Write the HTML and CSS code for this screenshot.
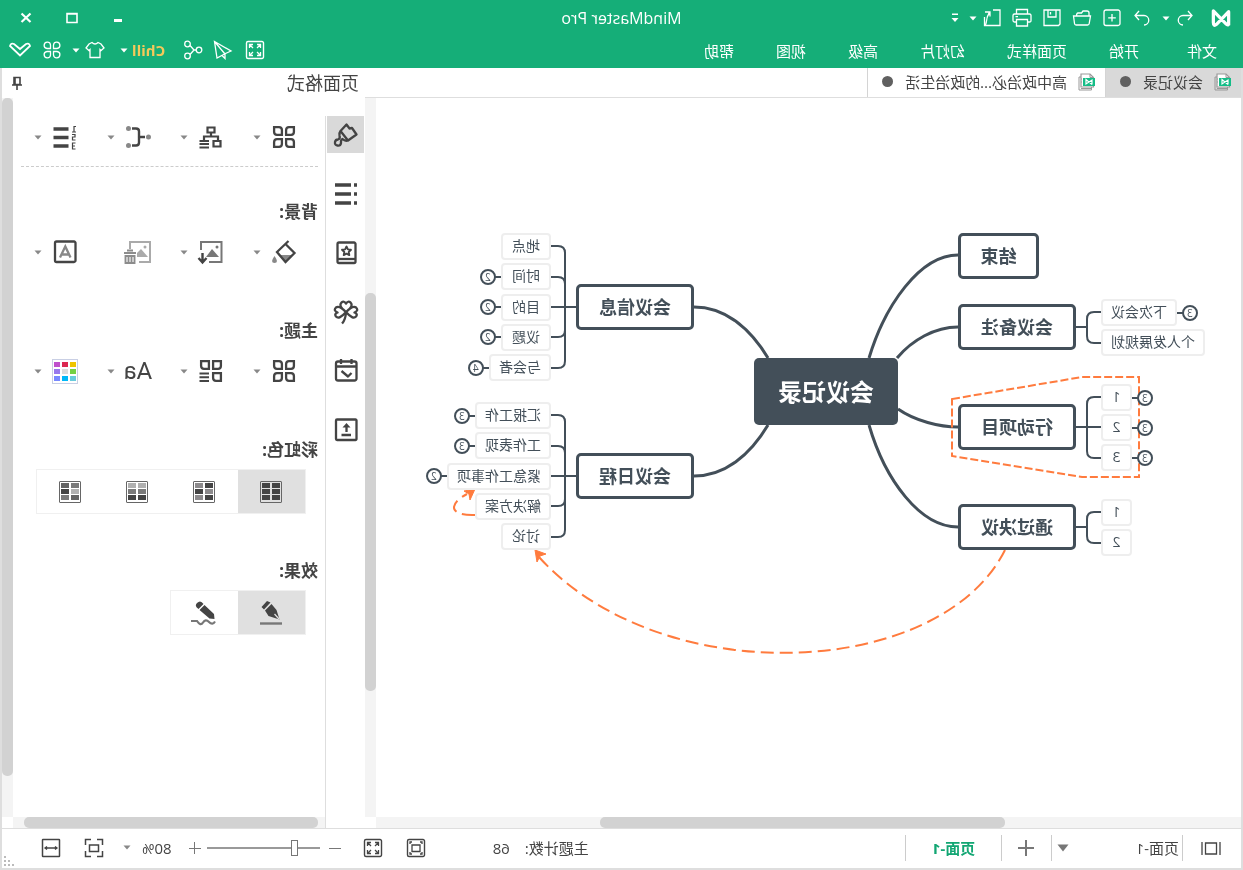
FILE: index.html
```html
<!DOCTYPE html>
<html lang="zh-CN">
<head>
<meta charset="utf-8">
<title>MindMaster Pro</title>
<link rel="stylesheet" href="styles.css">
</head>
<body>
<svg class="defs" aria-hidden="true">
  <symbol id="caret" viewBox="0 0 8 5"><path d="M0.5 0.5H7.5L4 4.5Z" fill="currentColor"/></symbol>
  <symbol id="doc" viewBox="0 0 18 18">
    <path d="M6 1H15V14H2.500V4.500Z" fill="#fff" stroke="#999" stroke-width="1.200"/>
    <path d="M4.500 14V17H17V4H15M6 1V4.500H2.500M14 6h1M14 9h1M5 15.500h10" fill="none" stroke="#999"/>
    <rect x="1" y="5" width="12" height="8" fill="#14bd87"/>
    <path d="M4 11.500V7L10 11V6.500L4 11.500M10 6.500V11.500M4 7V11.500" fill="none" stroke="#fff" stroke-width="1.200"/>
  </symbol>
  <symbol id="four" viewBox="0 0 24 24">
    <g fill="none" stroke="currentColor" stroke-width="2.300">
      <path d="M2.100 9.900V5A3 3 0 0 1 5 2.100H9.900V7A3 3 0 0 1 7 9.900Z" transform="rotate(90 6 6)"/>
      <path d="M14.100 2.100H19A3 3 0 0 1 21.900 5V9.900H17A3 3 0 0 1 14.100 7Z" transform="rotate(90 18 6)"/>
      <path d="M2.100 14.100H7A3 3 0 0 1 9.900 17V21.900H5A3 3 0 0 1 2.100 19Z" transform="rotate(90 6 18)"/>
      <path d="M14.100 14.100H19A3 3 0 0 1 21.900 17V21.900H17A3 3 0 0 1 14.100 19Z"/>
    </g>
  </symbol>
  <symbol id="expand" viewBox="0 0 20 20">
    <rect x="1.500" y="1.500" width="17" height="17" rx="1.500" fill="none" stroke="currentColor" stroke-width="1.400"/>
    <path d="M4.500 8V4.500H8M12 4.500h3.500V8M15.500 12v3.500H12M8 15.500H4.500V12M5 5l3 3M15 5l-3 3M15 15l-3-3M5 15l3-3" fill="none" stroke="currentColor" stroke-width="1.300"/>
  </symbol>
</svg>

<div class="app">
  <header class="titlebar">
    <svg class="logo" viewBox="0 0 22 20"><path d="M2.500 18V3L16 17Q19.500 20 19.500 15V2L6 16Q2.500 20 2.500 15" fill="none" stroke="#fff" stroke-width="3.600" stroke-linejoin="round"/></svg>
    <div class="quick">
      <div class="pair">
        <button class="ib" aria-label="撤销"><svg viewBox="0 0 20 20"><path d="M7 3L3 7.500L7 12M3.500 7.500H12a4.500 4.500 0 0 1 0 9.500" /></svg></button>
        <svg class="caret"><use href="#caret"/></svg>
      </div>
      <button class="ib" aria-label="重做"><svg viewBox="0 0 20 20"><path d="M13 3l4 4.500L13 12M16.500 7.500H8a4.500 4.500 0 0 0 0 9.500"/></svg></button>
      <button class="ib" aria-label="新建"><svg viewBox="0 0 20 20"><rect x="2" y="2" width="16" height="15.500" rx="2"/><path d="M10 6v7.500M6.200 9.800h7.600"/></svg></button>
      <button class="ib" aria-label="打开"><svg viewBox="0 0 20 20"><path d="M17 8V5Q17 3 15 3H11L9.500 5H6Q4.500 5 4.500 8M18.500 8H1.500L2.500 15.500Q2.700 17 4 17H15.500Q17 17 17.200 15.500Z" transform="translate(20 0) scale(-1 1)"/></svg></button>
      <button class="ib" aria-label="保存"><svg viewBox="0 0 20 20"><path d="M2 2H18V17.500H3.500L2 16ZM6 2V9H14V2M11.500 4V6.500"/></svg></button>
      <button class="ib" aria-label="打印"><svg viewBox="0 0 20 20"><path d="M4.500 6V1.500H15.500V6M4.500 14H2.500Q1 14 1 12.500V7.500Q1 6 2.500 6H17.500Q19 6 19 7.500V12.500Q19 14 17.500 14H15.500M4.500 11.500H15.500V18H4.500ZM14 8.700H16.500"/></svg></button>
      <div class="pair">
        <button class="ib" aria-label="导出"><svg viewBox="0 0 20 20"><path d="M9 2H2V17.500H17.500V9M17.500 17.500Q16 17 15.500 13Q15 8 12.500 4.500M12 8.500V4H17"/></svg></button>
        <svg class="caret"><use href="#caret"/></svg>
      </div>
      <svg class="custom" viewBox="0 0 8 10"><path d="M1 .5h6v1.500H1zM.5 5h7L4 9Z" fill="#fff"/></svg>
    </div>
    <h1>MindMaster Pro</h1>
    <div class="winbtns">
      <button class="ib" aria-label="最小化"><svg viewBox="0 0 20 20"><path d="M6 12.500h8" stroke-width="3"/></svg></button>
      <button class="ib" aria-label="最大化"><svg viewBox="0 0 20 20"><path d="M5 5.500h10v9H5zM5 6h10" stroke-width="1.600"/></svg></button>
      <button class="ib" aria-label="关闭"><svg viewBox="0 0 20 20"><path d="M5.500 5.500l9 8.500M14.500 5.500l-9 8.500" stroke-width="2.200"/></svg></button>
    </div>
  </header>

  <nav class="menubar">
    <a href="#" class="file">文件</a><a href="#">开始</a><a href="#">页面样式</a><a href="#">幻灯片</a><a href="#">高级</a><a href="#">视图</a><a href="#">帮助</a>
    <div class="tools">
      <button class="ib fullscreen" aria-label="全屏"><svg viewBox="0 0 20 20"><use href="#expand"/></svg></button>
      <button class="ib" aria-label="发送"><svg viewBox="0 0 20 20"><path d="M18.500 1.500L2 11L7.500 13.500L16 18ZM18.500 1.500L8 14V18.500L11 15.500"/></svg></button>
      <button class="ib share" aria-label="分享"><svg viewBox="0 0 20 20"><circle cx="4" cy="10" r="2.800"/><circle cx="15.500" cy="4" r="2.800"/><circle cx="15.500" cy="16" r="2.800"/><path d="M6.800 10H9L13 5.500M9 10L13 14.500"/></svg></button>
      <div class="pair chill"><a href="#">Chill</a><svg class="caret"><use href="#caret"/></svg></div>
      <div class="pair">
        <button class="ib" aria-label="主题外观"><svg viewBox="0 0 20 20"><path d="M7 2.500Q10 5.500 13 2.500L16 4L19 8L16 10.500L15 9.500V17.500H5V9.500L4 10.500L1 8L4 4Z"/></svg></button>
        <svg class="caret"><use href="#caret"/></svg>
      </div>
      <button class="ib" aria-label="应用"><svg viewBox="0 0 20 20"><path d="M8.500 8.500H5A3.200 3.200 0 1 1 8.500 5ZM11.500 8.500H15A3.200 3.200 0 1 0 11.500 5ZM8.500 11.500H5A3.200 3.200 0 1 0 8.500 15ZM11.500 11.500H15A3.200 3.200 0 1 1 11.500 15Z"/></svg></button>
      <button class="ib wide" aria-label="收起"><svg viewBox="0 0 24 20"><path d="M2 6Q3 2.500 6 4L12 9L18 4Q21 2.500 22 6L12 15.500Z" stroke-width="1.800"/></svg></button>
    </div>
  </nav>

  <main class="work">
    <section class="editor">
      <div class="tabs">
        <button class="tab on"><svg><use href="#doc"/></svg><span>会议记录</span><i></i></button>
        <button class="tab"><svg><use href="#doc"/></svg><span>高中政治必...的政治生活</span><i></i></button>
      </div>
      <div class="canvas">
        <div class="map">
          <svg class="links" viewBox="0 0 865 719">
            <g class="thick">
              <path d="M372 260C356 207 321 157 283 157M344 260C329 242 306 229 283 229M343 311C326 323 301 329 283 329M372 327C356 382 321 429 283 429"/>
              <path d="M473 260C491 230 516 209 547 209M473 327C491 357 516 378 547 378"/>
            </g>
            <g class="thin">
              <path d="M665 209H690M690 148H683Q676 148 676 155V263Q676 270 683 270H690M690 179H683Q676 179 676 186M690 239H683Q676 239 676 232"/>
              <path d="M665 378H690M690 317H683Q676 317 676 324V432Q676 439 683 439H690M690 348H683Q676 348 676 355M690 408H683Q676 408 676 401"/>
              <path d="M165 229H153M140 214H147Q154 214 154 221V238Q154 245 147 245H140"/>
              <path d="M165 329H140M140 299H147Q154 299 154 306V353Q154 360 147 360H140"/>
              <path d="M165 429H153M140 414H147Q154 414 154 421V438Q154 445 147 445H140"/>
            </g>
            <path class="bound" d="M289 301L159 279H102V379H159L289 358Z"/>
            <path class="relation" d="M236 452C301 582 581 594 703 458"/>
            <path class="head" d="M706 452L695 456L701 458L704 464Z"/>
            <path class="relation" d="M766 417C792 418 793 406 774 396"/>
            <path class="head" d="M766 391L777 393L772 396L771 402Z"/>
          </svg>

          <div class="topic root">会议记录</div>
          <div class="topic main end">结束</div>
          <div class="topic main notes">会议备注</div>
          <div class="topic main action">行动项目</div>
          <div class="topic main pass">通过决议</div>
          <div class="topic main info">会议信息</div>
          <div class="topic main agenda">会议日程</div>

          <ul class="subs back g-notes"><li><span>下次会议</span><b>3</b></li><li><span>个人发展规划</span></li></ul>
          <ul class="subs back narrow g-action"><li><span>1</span><b>3</b></li><li><span>2</span><b>3</b></li><li><span>3</span><b>3</b></li></ul>
          <ul class="subs back narrow g-pass"><li><span>1</span></li><li><span>2</span></li></ul>
          <ul class="subs g-info"><li><span>地点</span></li><li><span>时间</span><b>2</b></li><li><span>目的</span><b>2</b></li><li><span>议题</span><b>2</b></li><li><span>与会者</span><b>4</b></li></ul>
          <ul class="subs g-agenda"><li><span>汇报工作</span><b>3</b></li><li><span>工作表现</span><b>3</b></li><li><span>紧急工作事项</span><b>2</b></li><li><span>解决方案</span></li><li><span>讨论</span></li></ul>
        </div>
        <div class="vbar"><div></div></div>
        <div class="hbar"><div></div></div>
      </div>
    </section>

    <aside class="side">
      <div class="sidehead"><h2>页面格式</h2>
        <button class="ib pin" aria-label="固定"><svg viewBox="0 0 20 20"><path d="M7 4.500h6v7H7zM12 4.500v7M5 12h10M10 12v5" stroke-width="1.600"/></svg></button>
      </div>
      <div class="sidebody">
        <div class="rail">
          <button class="on" aria-label="格式"><svg viewBox="0 0 26 26"><path d="M18.500 9L12.500 2.500L9.500 6.500L7 6L2.500 12.500L11 18.500ZM11 18.500Q14 19.500 16.500 17Q18.500 18 18 21Q18.500 24 21.500 23.500Q24.500 23 24 20Q23.500 17.500 21 17.500Q18.500 16.500 19.500 13.500Q20 11 18.500 9"/></svg></button>
          <button aria-label="大纲"><svg viewBox="0 0 26 26"><path d="M8 4h16M8 13h16M8 22h16" stroke-width="3.400"/><path d="M2 4h3M2 13h3M2 22h3" stroke-width="3.400"/></svg></button>
          <button aria-label="图标"><svg viewBox="0 0 26 26"><rect x="3.500" y="2.500" width="18" height="20.500" rx="1.500"/><path d="M3.500 19h18"/><path d="M12.500 6.500l1.400 2.900 3.100.4-2.300 2.200.6 3.100L12.500 13.600l-2.800 1.500.6-3.100-2.300-2.200 3.100-.4Z" stroke-width="1.900"/></svg></button>
          <button aria-label="剪贴画"><svg viewBox="0 0 26 26"><path d="M13 13Q5 7 8.500 3.500Q11 1.500 13 4.500Q15 1.500 17.500 3.500Q21 7 13 13ZM13 13Q6 21 3 17.500Q1 15 4.500 13.500Q0 11.500 3 8.500Q6 6 13 13ZM13 13Q20 21 23 17.500Q25 15 21.500 13.500Q26 11.500 23 8.500Q20 6 13 13ZM13 13Q13.500 21 17 24.500"/></svg></button>
          <button aria-label="任务"><svg viewBox="0 0 26 26"><rect x="2.500" y="3.500" width="20.500" height="19" rx="2"/><path d="M2.500 8.500h20.500M7.500 1v5M18 1v5M17.500 13L11 18.500L7.500 15"/></svg></button>
          <button aria-label="导出"><svg viewBox="0 0 26 26"><rect x="2.500" y="2.500" width="20.500" height="20.500" rx="1"/><path d="M12.500 15V8M8 18h9.500"/><path d="M12.500 6l4 4.500h-8Z" fill="currentColor" stroke="none"/></svg></button>
        </div>
        <div class="props">
          <div class="row first">
            <button aria-label="布局"><svg><use href="#four"/></svg><svg class="caret"><use href="#caret"/></svg></button>
            <button aria-label="结构"><svg viewBox="0 0 24 24"><path d="M8.500 2.500h7v5h-7zM12 7.500v4M5 15v-3.500h14V15M2.500 16h7v5.500h-7z" fill="none" stroke="currentColor" stroke-width="2.200"/><path d="M14 16h9.500M14 19h9.500M14 22.500h9.500" stroke="currentColor" stroke-width="1.900"/></svg><svg class="caret"><use href="#caret"/></svg></button>
            <button aria-label="连接样式"><svg class="w28" viewBox="0 0 28 24"><path d="M7 12h6M20 3.500h-4q-3 0-3 3v11q0 3 3 3h4" fill="none" stroke="currentColor" stroke-width="2.400"/><g fill="#888"><circle cx="3.500" cy="12" r="2.500"/><circle cx="23.500" cy="3.500" r="2.500"/><circle cx="23.500" cy="20.500" r="2.500"/></g></svg><svg class="caret"><use href="#caret"/></svg></button>
            <button aria-label="编号"><svg viewBox="0 0 24 24"><path d="M8.500 4h15M8.500 12.500h15M8.500 21h15" stroke="currentColor" stroke-width="3.400"/><path d="M1 1.500h2V7M1 7h4M5 9.500H2v2.500h2.500v3H1.500M1.500 18H4.500v6H1.500M2 21h2.500" fill="none" stroke="currentColor" stroke-width="1.200"/></svg><svg class="caret"><use href="#caret"/></svg></button>
          </div>
          <section>
            <h3>背景:</h3>
            <div class="row">
              <button aria-label="填充"><svg viewBox="0 0 24 24"><path d="M3.500 15h14L10.500 22Z" fill="#888"/><path d="M7.500 1L19 12L10.500 22L1.500 13L11 3.500" fill="none" stroke="currentColor" stroke-width="2.300"/><path d="M21.500 16q5 7 0 7t0-7" fill="#888"/></svg><svg class="caret"><use href="#caret"/></svg></button>
              <button aria-label="插入图片"><svg viewBox="0 0 24 24"><path d="M14 22H1.500V2H22V10" fill="none" stroke="#777" stroke-width="2"/><path d="M4 17L11 9L17 17Z" fill="#777"/><circle cx="6" cy="7" r="1.500" fill="#777"/><path d="M20.500 13v8M16.500 18l4 4.500L24.500 18" fill="none" stroke="currentColor" stroke-width="2.400"/></svg><svg class="caret"><use href="#caret"/></svg></button>
              <button aria-label="删除图片"><svg class="w28" viewBox="0 0 28 24"><path d="M13 22H2V2H22V9" fill="none" stroke="#aaa" stroke-width="2"/><path d="M4 17L11 9L15 13V17Z" fill="#aaa"/><circle cx="7" cy="7" r="1.500" fill="#aaa"/><path d="M16 13h12M19 10.500h6M17.500 16h9v7h-9zM20.500 17v5M23.500 17v5" fill="none" stroke="#8c8c8c" stroke-width="1.900"/></svg></button>
              <button aria-label="水印"><svg viewBox="0 0 24 24"><rect x="1.500" y="1.500" width="20.500" height="20.500" rx="1.500" fill="none" stroke="currentColor" stroke-width="2.300"/><path d="M6.500 17.500L11.700 6.500L17 17.500M8.500 14.500h6.500" fill="none" stroke="#888" stroke-width="2.300"/></svg><svg class="caret"><use href="#caret"/></svg></button>
            </div>
          </section>
          <section>
            <h3>主题:</h3>
            <div class="row">
              <button aria-label="主题"><svg><use href="#four"/></svg><svg class="caret"><use href="#caret"/></svg></button>
              <button aria-label="主题样式"><svg viewBox="0 0 24 24"><g fill="none" stroke="currentColor" stroke-width="2.300"><path d="M2.100 2.100H9.900V9.900H5A3 3 0 0 1 2.100 7ZM14.100 2.100H21.900V7A3 3 0 0 1 19 9.900H14.100ZM2.100 14.100H9.900V19A3 3 0 0 1 7 21.900H2.100Z"/></g><path d="M14 14.500h9.500M14 18.300h9.500M14 22h9.500" stroke="currentColor" stroke-width="2"/></svg><svg class="caret"><use href="#caret"/></svg></button>
              <button aria-label="字体"><span class="aa">Aa</span><svg class="caret"><use href="#caret"/></svg></button>
              <button aria-label="配色"><span class="palette"><i></i><i></i><i></i><i></i><i></i><i></i><i></i><i></i><i></i></span><svg class="caret"><use href="#caret"/></svg></button>
            </div>
          </section>
          <section class="tight">
            <h3>彩虹色:</h3>
            <div class="seg">
              <button class="on" aria-label="彩虹色 1"><span class="swatch s1"><i></i><i></i><i></i><i></i><i></i><i></i></span></button>
              <button aria-label="彩虹色 2"><span class="swatch s2"><i></i><i></i><i></i><i></i><i></i><i></i></span></button>
              <button aria-label="彩虹色 3"><span class="swatch s3"><i></i><i></i><i></i><i></i><i></i><i></i></span></button>
              <button aria-label="彩虹色 4"><span class="swatch s4"><i></i><i></i><i></i><i></i><i></i><i></i></span></button>
            </div>
          </section>
          <section class="tight late">
            <h3>效果:</h3>
            <div class="seg">
              <button class="on" aria-label="标准"><svg viewBox="0 0 26 26"><path d="M13.500 2.500L17 1L22.500 7L20 9.500ZM12.500 4L19 10.500L15.500 16L4.500 19.500L7.500 10Z" fill="currentColor"/><path d="M5 19l4.500-5" stroke="#e0e0e0" stroke-width="1.300"/><path d="M2 23.500h22" stroke="#777" stroke-width="2.400"/></svg></button>
              <button aria-label="手绘"><svg viewBox="0 0 26 26"><path d="M13.500 4Q16.500-.5 20 3Q23 6 18.500 9ZM12.500 5L17.500 10L7.500 18.500L2.500 19L3 14Z" fill="currentColor"/><path d="M2 21.500q2.500 4 6 .5t6 .5t6-1.500h6" fill="none" stroke="#777" stroke-width="2.200"/></svg></button>
            </div>
          </section>
        </div>
        <div class="vbar"><div></div></div>
        <div class="hbar"><div></div></div>
      </div>
    </aside>
  </main>

  <footer class="status">
    <button class="ib pages" aria-label="页面列表"><svg viewBox="0 0 22 20"><path d="M2 4v13M20 4v13M5.500 5h11v11h-11z"/></svg></button>
    <div class="picker">
      <select aria-label="当前页面"><option>页面-1</option></select>
      <svg viewBox="0 0 12 8"><path d="M.5.5h11L6 7.500Z" fill="#777"/></svg>
    </div>
    <button class="add" aria-label="添加页面"><svg viewBox="0 0 16 16"><path d="M8 0v16M0 8h16"/></svg></button>
    <button class="page">页面-1</button>
    <div class="count"><span>主题计数:</span><span>68</span></div>
    <button class="ib fit" aria-label="适合页面"><svg viewBox="0 0 20 20"><rect x="1.500" y="1.500" width="17" height="17" rx="1.500" stroke-width="1.400"/><path d="M6 7h8v6.500H6zM4 6V4h2M14 4h2v2M16 14v2h-2M6 16H4v-2"/></svg></button>
    <button class="ib full" aria-label="全屏显示"><svg viewBox="0 0 20 20"><use href="#expand"/></svg></button>
    <button class="step" aria-label="缩小"><svg viewBox="0 0 12 12"><path d="M0 6.500h12"/></svg></button>
    <input type="range" min="0" max="100" value="20" aria-label="缩放">
    <button class="step" aria-label="放大"><svg viewBox="0 0 12 12"><path d="M0 6.500h12M6.500 0v12"/></svg></button>
    <button class="zoom"><span>80%</span><svg class="caret"><use href="#caret"/></svg></button>
    <button class="ib focus" aria-label="居中"><svg viewBox="0 0 20 20"><path d="M1.500 7V1.500H7M13 1.500h5.500V7M18.500 13v5.500H13M7 18.500H1.500V13M5.500 7h9v6.500h-9z" stroke-width="1.500"/></svg></button>
    <button class="ib" aria-label="适合宽度"><svg viewBox="0 0 20 20"><rect x="1.500" y="1.500" width="17" height="17" rx=".5" stroke-width="1.500"/><path d="M4 10h12M6 8.500L4 10l2 1.500M14 8.500L16 10l-2 1.500"/></svg></button>
    <svg class="grip" viewBox="0 0 10 10"><path d="M8 0h2v2H8zM8 4h2v2H8zM8 8h2v2H8zM4 4h2v2H4zM4 8h2v2H4zM0 8h2v2H0z" fill="#bbb"/></svg>
  </footer>
</div>
</body>
</html>
```
FILE: styles.css
```css
* { box-sizing: border-box; }

html, body { margin: 0; height: 100%; }

body {
  font: 15px/20px "Open Sans", "Noto Sans CJK SC", sans-serif;
  color: #444;
  background: #fff;
  overflow: hidden;
}

.defs { position: absolute; width: 0; height: 0; }

button, select, input { font: inherit; color: inherit; margin: 0; }
button { border: 0; padding: 0; background: none; }
a { color: inherit; text-decoration: none; }
svg { display: block; }
h1, h2, h3, ul { margin: 0; padding: 0; font-weight: normal; }

/* The window is shown flipped horizontally */
.app {
  transform: scaleX(-1);
  display: flex;
  flex-direction: column;
  height: 100vh;
}

.ib { width: 20px; height: 20px; flex: none; }
.ib svg { width: 100%; height: 20px; fill: none; stroke: currentColor; stroke-width: 1.3; }
.caret { width: 8px; height: 5px; flex: none; }
.pair { display: flex; align-items: center; gap: 5px; }

/* Title bar */
.titlebar, .menubar { display: flex; align-items: center; background: #15ae78; color: #fff; flex: none; }
.titlebar { position: relative; height: 36px; padding: 0 16px 0 11px; }
.logo { width: 22px; height: 18px; margin-right: 15px; }
.quick { display: flex; align-items: center; gap: 10px; }
.custom { width: 8px; height: 10px; }
.titlebar h1 { position: absolute; left: 50%; transform: translateX(-50%); font-size: 16px; line-height: 20px; }
.winbtns { display: flex; gap: 26px; margin-left: auto; }

/* Menu bar */
.menubar { height: 32px; padding: 0 8px 2px 26px; gap: 42px; }
.menubar .file { margin-right: 6px; }
.tools { display: flex; align-items: center; gap: 10px; margin-left: auto; padding-bottom: 2px; }
.fullscreen { margin-right: 2px; }
.share { margin-right: 8px; }
.chill { margin-right: 5px; font-weight: bold; color: #f5c95a; gap: 4px; }
.chill svg { color: #fff; }
.wide { width: 24px; }

/* Work area */
.work { flex: 1; min-height: 0; display: flex; border: 2px solid #dedede; border-width: 0 2px; }
.editor { flex: 1; min-width: 0; display: flex; flex-direction: column; }
.tabs { display: flex; height: 30px; border-bottom: 1px solid #dedede; flex: none; }
.tab { display: flex; align-items: center; border-right: 1px solid #d4d4d4; padding: 0 14px 2px 9px; white-space: nowrap; }
.tab svg { width: 18px; height: 18px; margin-right: 11px; }
.tab i { width: 11px; height: 11px; border-radius: 50%; background: #606060; margin-left: 12px; }
.tab.on { background: #d9d9d9; }

.canvas, .sidebody { flex: 1; min-height: 0; display: grid; grid-template: minmax(0, 1fr) 11px / minmax(0, 1fr) 11px; }
.vbar, .hbar { background: #f4f4f4; }
.vbar div, .hbar div { background: #d2d2d2; border-radius: 5px; }
.vbar div { width: 11px; height: 398px; margin-top: 195px; }
.hbar div { height: 11px; width: 405px; margin-left: 236px; }

/* Mind map */
.map { position: relative; overflow: hidden; }
.links { position: absolute; left: 0; top: 0; width: 865px; height: 719px; fill: none; stroke: #434f59; }
.thick { stroke-width: 3; }
.thin { stroke-width: 2; }
.bound { stroke: #ff7b3e; stroke-width: 2; stroke-dasharray: 8 3; }
.relation { stroke: #ff7b3e; stroke-width: 2; stroke-dasharray: 13 6; }
.head { fill: #ff7b3e; stroke: #ff7b3e; }

.topic { position: absolute; display: flex; align-items: center; justify-content: center; font-weight: bold; white-space: nowrap; border-radius: 5px; }
.root { left: 343px; top: 260px; width: 144px; height: 67px; background: #434f59; color: #fff; font-size: 24px; }
.main { width: 118px; height: 46px; border: 3px solid #434f59; background: #fff; color: #434f59; font-size: 18px; }
.end { left: 202px; top: 135px; width: 81px; }
.notes { left: 165px; top: 206px; }
.action { left: 165px; top: 306px; }
.pass { left: 165px; top: 406px; }
.info { left: 547px; top: 186px; }
.agenda { left: 547px; top: 355px; }

.subs { position: absolute; left: 690px; display: flex; flex-direction: column; justify-content: space-between; list-style: none; font-size: 14px; color: #434f59; }
.subs.back { left: auto; right: calc(100% - 140px); }
.subs li { display: flex; align-items: center; height: 27px; }
.subs.back li { flex-direction: row-reverse; }
.subs span { min-width: 50px; height: 27px; padding: 0 8px; border: 2px solid #eee; border-radius: 4px; background: #fff; line-height: 21px; text-align: center; white-space: nowrap; }
.subs.narrow span { min-width: 31px; }
.subs b { position: relative; width: 16px; height: 16px; margin: 0 5px; border: 2px solid #434f59; border-radius: 50%; background: #fff; font-size: 10px; font-weight: normal; line-height: 12px; text-align: center; }
.subs b::before { content: ""; position: absolute; top: 5px; right: 100%; width: 7px; height: 2px; background: #434f59; }
.subs.back b::before { right: auto; left: 100%; }
.g-notes { top: 201px; height: 57px; }
.g-action { top: 286px; height: 87px; }
.g-pass { top: 401px; height: 57px; }
.g-info { top: 135px; height: 148px; }
.g-agenda { top: 304px; height: 148px; }

/* Format panel */
.side { width: 363px; flex: none; display: flex; flex-direction: column; }
.sidehead { display: flex; align-items: center; justify-content: space-between; height: 30px; padding: 0 5px 0 6px; flex: none; }
.sidehead h2 { font-size: 18px; line-height: 24px; }
.sidebody { grid-template-columns: 40px minmax(0, 1fr) 11px; }
.sidebody .vbar div { height: 678px; margin-top: 0; }
.sidebody .hbar { grid-column: 2; }
.sidebody .hbar div { width: auto; margin: 0 11px 0 7px; }
.rail { grid-row: 1 / 3; display: flex; flex-direction: column; gap: 22px; margin-top: 18px; padding: 0 1px; border-right: 1px solid #dedede; }
.rail button { width: 37px; height: 37px; padding: 5px; flex: none; }
.rail .on { background: #d9d9d9; }
.rail svg { width: 26px; height: 26px; fill: none; stroke: currentColor; stroke-width: 2.3; stroke-linejoin: round; }

.props { padding: 27px 8px 0 7px; overflow: hidden; }
.row { display: grid; grid-template-columns: repeat(4, 73px); height: 24px; padding-left: 22px; }
.row button { display: flex; align-items: center; gap: 11px; height: 24px; }
.row svg:not(.caret) { width: 24px; height: 24px; overflow: visible; }
.row svg.w28 { width: 28px; margin: 0 -2px; }
.row .caret { color: #888; }
.row.first { height: 42px; border-bottom: 1px dashed #ccc; }
.props section { margin-top: 55px; }
.props .first + section { margin-top: 33px; }
.props .late { margin-top: 45px; }
.props h3 { font-size: 17px; line-height: 24px; font-weight: bold; margin-bottom: 16px; }
.props .tight h3 { margin-bottom: 7px; }
.aa { width: 32px; margin: 0 -4px; font: 24px/24px Roboto, sans-serif; }
.palette { display: grid; grid-template-columns: repeat(3, 6px); grid-auto-rows: 5px; gap: 2px; width: 26px; height: 25px; margin: 0 -1px; padding: 2px; border: 1px solid #c9cfe4; place-content: center; }
.palette i:nth-child(1) { background: #efc400; }
.palette i:nth-child(2) { background: #dc2850; }
.palette i:nth-child(3) { background: #c050cc; }
.palette i:nth-child(4) { background: #74d044; }
.palette i:nth-child(5) { background: #dcdcdc; }
.palette i:nth-child(6) { background: #9878ec; }
.palette i:nth-child(7) { background: #68ccdc; }
.palette i:nth-child(8) { background: #00b8f8; }
.palette i:nth-child(9) { background: #7888ff; }

.seg { display: inline-flex; margin-left: 12px; border: 1px solid #f0f0f0; height: 45px; vertical-align: top; }
.seg button { width: 67px; display: grid; place-items: center; }
.seg .on { background: #e0e0e0; }
.seg svg { width: 26px; height: 26px; }
.swatch { display: grid; grid-template-columns: 8px 8px; grid-auto-rows: 5px; gap: 1px 2px; width: 22px; height: 22px; border: 1px solid #666; place-content: center; border-radius: 1px; }
.swatch i { background: #444; }
.s2 i:nth-child(2), .s2 i:nth-child(3), .s2 i:nth-child(6) { background: #8c8a8c; }
.s3 i:nth-child(-n+2) { background: #b0b0b0; }
.s3 i:nth-child(3), .s3 i:nth-child(4) { background: #7a7a7a; }
.s4 i:nth-child(1), .s4 i:nth-child(6) { background: #7a7a7a; }
.s4 i:nth-child(2), .s4 i:nth-child(5) { background: #636363; }
.s4 i:nth-child(3) { background: #b0b0b0; }

/* Status bar */
.status { position: relative; display: flex; align-items: center; flex: none; height: 42px; padding: 0 39px 2px 19px; border: 2px solid #dedede; border-top-width: 1px; }
.pages { width: 22px; margin-right: 17px; }
.picker { position: relative; width: 132px; height: 26px; border: 1px solid #ccc; border-width: 0 1px; }
.picker select { appearance: none; width: 100%; height: 26px; border: 0; padding: 0 3px; background: none; }
.picker svg { position: absolute; right: 5px; top: 9px; width: 12px; height: 8px; pointer-events: none; }
.add { width: 50px; height: 26px; display: grid; place-items: center; border-right: 1px solid #ccc; }
.add svg { width: 16px; height: 16px; stroke: #777; stroke-width: 2; }
.page { width: 96px; height: 26px; border-right: 1px solid #ccc; color: #12a673; font-weight: bold; }
.count { display: flex; gap: 15px; margin-left: auto; margin-right: 67px; white-space: nowrap; }
.fit { margin-right: 23px; }
.full { margin-right: 22px; }
.step { width: 12px; height: 12px; }
.step svg { width: 12px; height: 12px; stroke: #777; }
.status input { appearance: none; width: 113px; height: 16px; margin: 0 6px 0 9px; background: linear-gradient(#999, #999) center / 100% 2px no-repeat; }
.status input::-webkit-slider-thumb { appearance: none; width: 7px; height: 16px; border: 1px solid #777; background: #fff; }
.zoom { display: flex; align-items: center; gap: 11px; margin: 0 19px 0 17px; }
.zoom .caret { color: #888; }
.focus { margin-right: 23px; }
.grip { position: absolute; right: 2px; bottom: 2px; width: 10px; height: 10px; }
```
